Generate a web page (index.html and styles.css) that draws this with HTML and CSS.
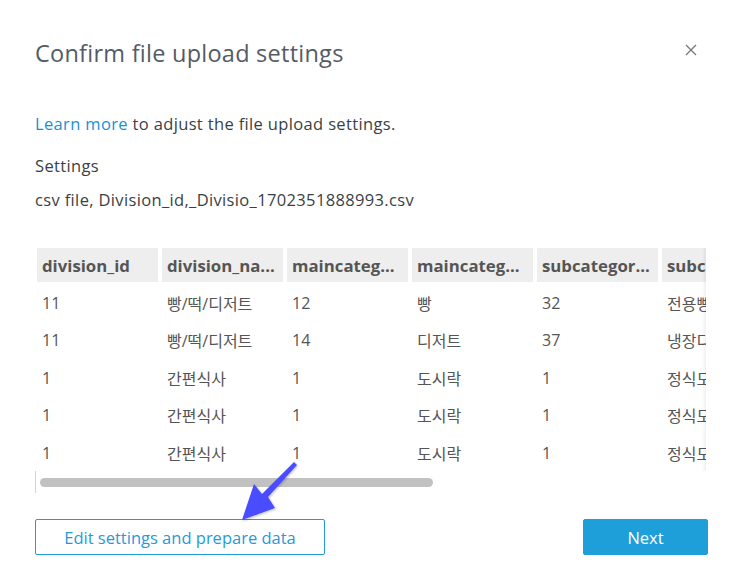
FILE: index.html
```html
<!DOCTYPE html>
<html>
<head>
<meta charset="utf-8">
<link rel="stylesheet" href="styles.css">
</head>
<body>
<div class="dialog">
  <div class="header">
    <h1 class="title">Confirm file upload settings</h1>
    <svg class="close" width="12" height="12" viewBox="0 0 12 12"><path d="M1 1L11 11M11 1L1 11" stroke="#777" stroke-width="1.3" fill="none"/></svg>
  </div>
  <p class="intro"><a class="link">Learn more</a> to adjust the file upload settings.</p>
  <p class="label">Settings</p>
  <p class="file">csv file, Division_id,_Divisio_1702351888993.csv</p>
  <div class="table-wrap">
    <div class="table">
      <div class="th">division_id</div>
      <div class="th">division_na...</div>
      <div class="th">maincateg...</div>
      <div class="th">maincateg...</div>
      <div class="th">subcategor...</div>
      <div class="th">subca</div>

      <div class="td">11</div><div class="td">빵/떡/디저트</div><div class="td">12</div><div class="td">빵</div><div class="td">32</div><div class="td">전용빵</div>
      <div class="td">11</div><div class="td">빵/떡/디저트</div><div class="td">14</div><div class="td">디저트</div><div class="td">37</div><div class="td">냉장디</div>
      <div class="td">1</div><div class="td">간편식사</div><div class="td">1</div><div class="td">도시락</div><div class="td">1</div><div class="td">정식도</div>
      <div class="td">1</div><div class="td">간편식사</div><div class="td">1</div><div class="td">도시락</div><div class="td">1</div><div class="td">정식도</div>
      <div class="td">1</div><div class="td">간편식사</div><div class="td">1</div><div class="td">도시락</div><div class="td">1</div><div class="td">정식도</div>
    </div>
    <div class="fade"></div>
  </div>
  <div class="scrollbar"><div class="thumb"></div></div>
  <div class="actions">
    <button class="btn-outline">Edit settings and prepare data</button>
    <button class="btn-primary">Next</button>
  </div>
  <svg class="arrow" width="70" height="70" viewBox="0 0 70 70">
    <defs><filter id="sh" x="-20%" y="-20%" width="140%" height="140%"><feDropShadow dx="1" dy="1" stdDeviation="1" flood-color="#000" flood-opacity="0.25"/></filter></defs>
    <polygon filter="url(#sh)" fill="#4a4dff" points="57,2 60,5 31,37 38,48 5,60 17,24 25,34"/>
  </svg>
</div>
</body>
</html>
```
FILE: styles.css
```css
* { box-sizing: border-box; }
html, body { margin: 0; padding: 0; background: #fff; }
body {
  font-family: "Open Sans", "Noto Sans CJK KR", sans-serif;
  color: #3a3f45;
  font-size: 16px;
}
.dialog {
  position: relative;
  width: 745px;
  height: 584px;
  padding: 36px 37px 0 35px;
}
.header {
  display: flex;
  justify-content: space-between;
  align-items: center;
  height: 34px;
}
.title {
  margin: 0;
  font-size: 23.5px;
  font-weight: 400;
  color: #545b64;
  letter-spacing: 0.25px;
}
.close { margin-right: 11px; margin-top: -6px; }
.intro, .label, .file { font-size: 16.5px; letter-spacing: 0.35px; }
.intro { margin: 43px 0 0; line-height: 22px; }
.link { color: #1a8fd6; }
.label { margin: 20px 0 0; line-height: 22px; }
.file { margin: 12px 0 0; line-height: 22px; }
.table-wrap {
  position: relative;
  margin: 37px 0 0 2px;
  width: 669px;
  height: 223px;
  overflow: hidden;
}
.table {
  display: grid;
  grid-template-columns: repeat(6, 121px);
  column-gap: 4px;
  grid-auto-rows: 37.5px;
  grid-template-rows: 34px;
  font-family: "Open Sans", "Noto Sans CJK KR", sans-serif;
  color: #555;
  width: max-content;
}
.th {
  background: #eeeeee;
  font-weight: 700;
  font-size: 16.8px;
  padding-left: 5px;
  display: flex;
  align-items: center;
  white-space: nowrap;
  overflow: hidden;
}
.td {
  font-size: 16px;
  padding-left: 5px;
  padding-top: 4px;
  display: flex;
  align-items: center;
  white-space: nowrap;
}
.fade {
  position: absolute;
  right: 0; top: 0; bottom: 0;
  width: 4px;
  background: linear-gradient(to right, rgba(255,255,255,0), rgba(0,0,0,0.06));
}
.scrollbar {
  height: 22px;
  border-left: 1px solid #d5d5d5;
  display: flex;
  align-items: center;
  padding-left: 4px;
}
.thumb {
  width: 393px;
  height: 9px;
  border-radius: 5px;
  background: #c1c1c1;
}
.actions {
  display: flex;
  justify-content: space-between;
  margin-top: 26px;
}
.actions button {
  font-family: "Open Sans", sans-serif;
  font-size: 16.5px;
  height: 36px;
  border-radius: 2px;
  cursor: pointer;
}
.btn-outline {
  width: 290px;
  background: #fff;
  border: 1px solid #1f9bd7;
  color: #1f9bd7;
}
.btn-primary {
  width: 125px;
  background: #1f9fd9;
  border: 1px solid #1f9fd9;
  color: #fff;
}
.arrow {
  position: absolute;
  left: 237px;
  top: 460px;
}
```
